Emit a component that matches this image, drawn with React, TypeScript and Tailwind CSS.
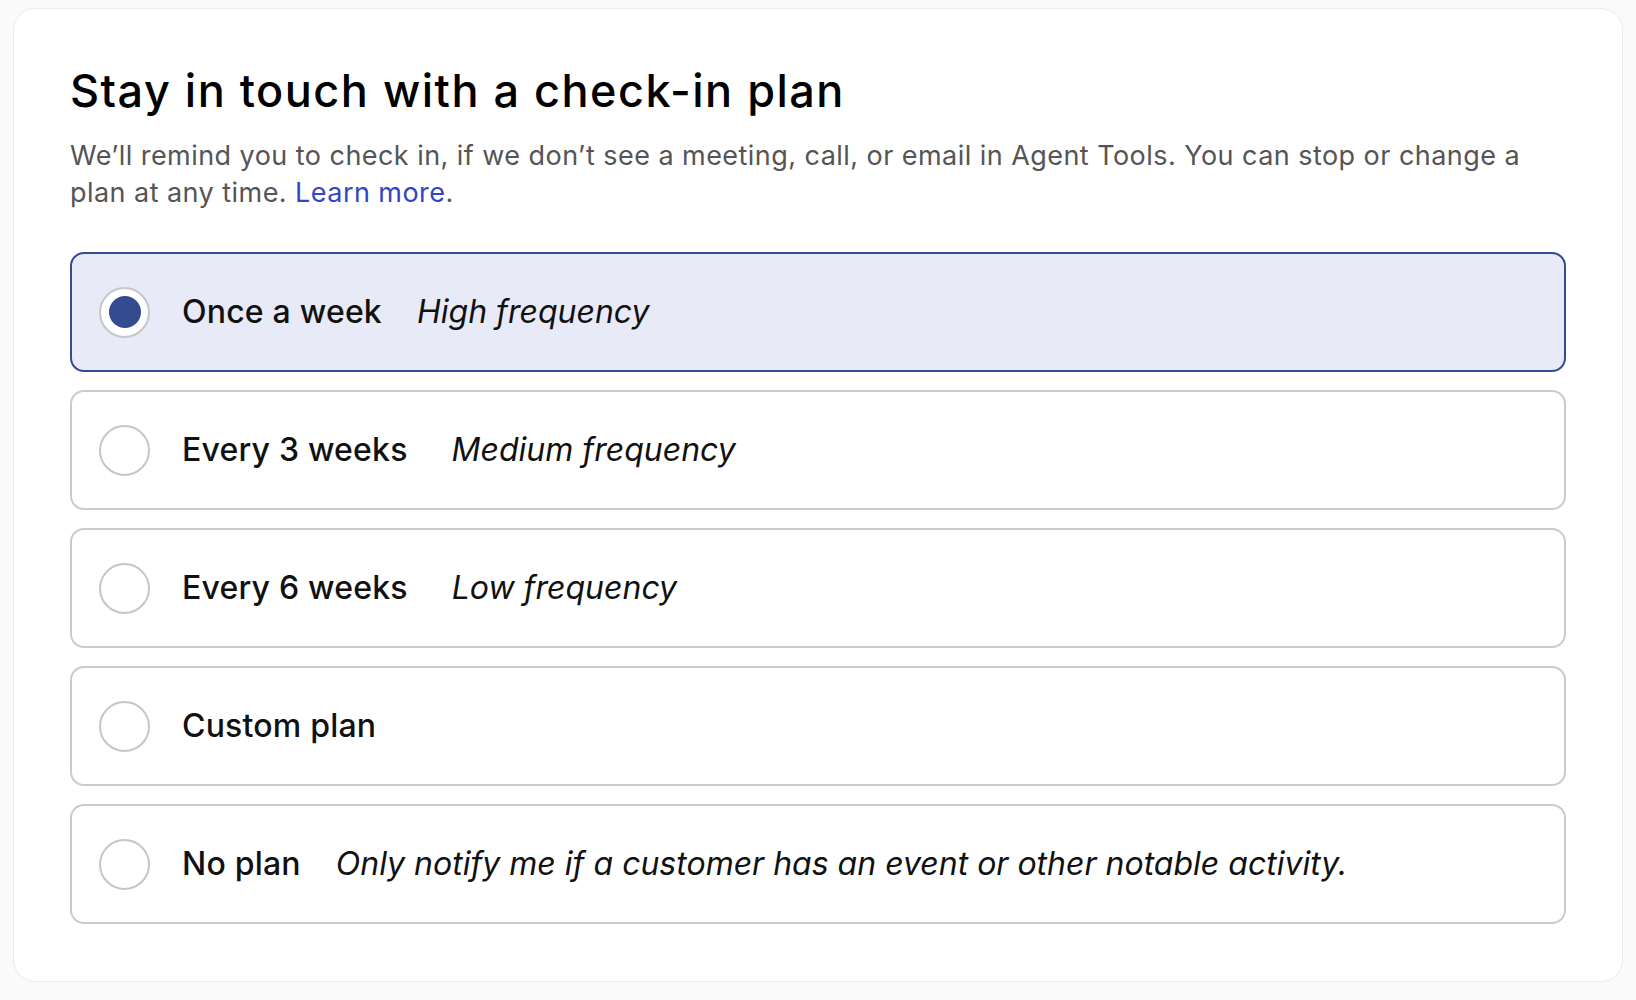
import { useState } from "react";

type Plan = {
  id: string;
  label: string;
  hint?: string;
  hintGap: string;
};

const plans: Plan[] = [
  { id: "weekly", label: "Once a week", hint: "High frequency", hintGap: "ml-[35px]" },
  { id: "3weeks", label: "Every 3 weeks", hint: "Medium frequency", hintGap: "ml-[44px]" },
  { id: "6weeks", label: "Every 6 weeks", hint: "Low frequency", hintGap: "ml-[44px]" },
  { id: "custom", label: "Custom plan", hintGap: "" },
  {
    id: "none",
    label: "No plan",
    hint: "Only notify me if a customer has an event or other notable activity.",
    hintGap: "ml-[35px]",
  },
];

function Radio({ checked }: { checked: boolean }) {
  return (
    <span className="flex h-[51px] w-[51px] flex-shrink-0 items-center justify-center rounded-full border-2 border-[#c6c6c6] bg-white">
      {checked && <span className="h-[32px] w-[32px] rounded-full bg-[#344c8f]" />}
    </span>
  );
}

export default function App() {
  const [selected, setSelected] = useState("weekly");

  return (
    <div className="min-h-[1000px] bg-[#fafafa] pl-[13px] pt-[8px] font-['Inter',sans-serif]">
      <div className="h-[974px] w-[1610px] rounded-[22px] border border-[#ebebeb] bg-white px-[56px] pt-[55px]">
        <h1 className="text-[45px] font-medium leading-[54px] tracking-[1.5px] text-black">
          Stay in touch with a check-in plan
        </h1>
        <p className="mt-[19px] max-w-[1490px] text-[27px] leading-[37px] tracking-[0.45px] text-[#555555]">
          We’ll remind you to check in, if we don’t see a meeting, call, or email in Agent Tools. You can stop or
          change a plan at any time.{" "}
          <a href="#" className="text-[#3344c4]">
            Learn more
          </a>
          .
        </p>

        <div className="mt-[41px] flex flex-col gap-[18px]">
          {plans.map((p) => {
            const checked = p.id === selected;
            return (
              <button
                key={p.id}
                type="button"
                onClick={() => setSelected(p.id)}
                className={
                  checked
                    ? "flex h-[120px] items-center rounded-[14px] border-2 border-[#344c8f] bg-[#e8eaf7] pl-[27px] text-left"
                    : "flex h-[120px] items-center rounded-[14px] border-2 border-[#cbcbcb] bg-white pl-[27px] text-left"
                }
              >
                <Radio checked={checked} />
                <span className="ml-[32px] text-[32px] font-medium tracking-[0.2px] text-[#111111]">{p.label}</span>
                {p.hint && <span className={`${p.hintGap} text-[32px] italic text-[#111111]`}>{p.hint}</span>}
              </button>
            );
          })}
        </div>
      </div>
    </div>
  );
}
